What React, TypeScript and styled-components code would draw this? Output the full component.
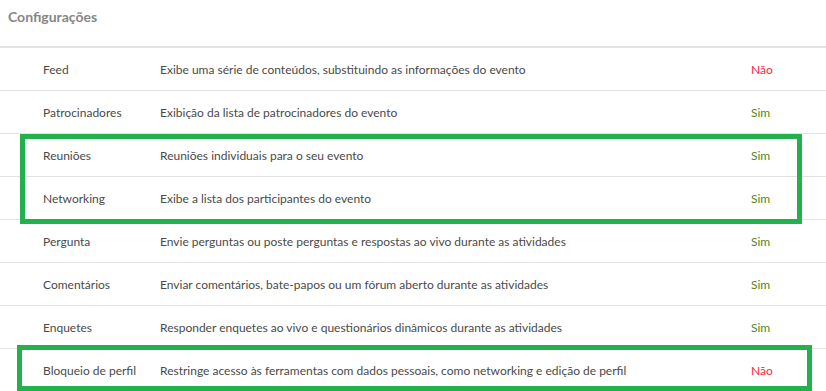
import React from "react";
import styled, { createGlobalStyle } from "styled-components";

const GlobalStyle = createGlobalStyle`
  html, body {
    margin: 0;
    padding: 0;
    background: #ffffff;
  }
  body {
    font-family: Lato, "Open Sans", "Liberation Sans", sans-serif;
  }
`;

const Page = styled.div`
  position: relative;
  width: 826px;
  height: 391px;
  overflow: hidden;
  background: #ffffff;
`;

const Header = styled.div`
  height: 48px;
  display: flex;
  align-items: flex-start;
  padding: 8px 0 0 8px;
  box-sizing: border-box;
  border-bottom: 2px solid #e3e3e3;
`;

const Title = styled.h2`
  margin: 0;
  font-size: 14px;
  line-height: 18px;
  font-weight: 700;
  color: #868686;
`;

const Table = styled.div`
  display: flex;
  flex-direction: column;
`;

const Row = styled.div`
  display: grid;
  grid-template-columns: 160px 1fr 75px;
  align-items: center;
  height: 43px;
  box-sizing: border-box;
  border-bottom: 1px solid #e2e2e2;
  font-size: 12px;
  color: #4a4a4a;
`;

const Name = styled.div`
  padding-left: 43px;
`;

const Description = styled.div`
  white-space: nowrap;
`;

const Status = styled.div<{ $on: boolean }>`
  color: ${(p) => (p.$on ? "#55861a" : "#f5283e")};
`;

const Highlight = styled.div<{ $top: number; $left: number; $width: number; $height: number }>`
  position: absolute;
  top: ${(p) => p.$top}px;
  left: ${(p) => p.$left}px;
  width: ${(p) => p.$width}px;
  height: ${(p) => p.$height}px;
  border: 5px solid #22b14c;
  box-sizing: border-box;
  pointer-events: none;
`;

const rows = [
  { name: "Feed", desc: "Exibe uma série de conteúdos, substituindo as informações do evento", on: false },
  { name: "Patrocinadores", desc: "Exibição da lista de patrocinadores do evento", on: true },
  { name: "Reuniões", desc: "Reuniões individuais para o seu evento", on: true },
  { name: "Networking", desc: "Exibe a lista dos participantes do evento", on: true },
  { name: "Pergunta", desc: "Envie perguntas ou poste perguntas e respostas ao vivo durante as atividades", on: true },
  { name: "Comentários", desc: "Enviar comentários, bate-papos ou um fórum aberto durante as atividades", on: true },
  { name: "Enquetes", desc: "Responder enquetes ao vivo e questionários dinâmicos durante as atividades", on: true },
  { name: "Bloqueio de perfil", desc: "Restringe acesso às ferramentas com dados pessoais, como networking e edição de perfil", on: false },
];

export default function App() {
  return (
    <>
      <GlobalStyle />
      <Page>
        <Header>
          <Title>Configurações</Title>
        </Header>
        <Table>
          {rows.map((r) => (
            <Row key={r.name}>
              <Name>{r.name}</Name>
              <Description>{r.desc}</Description>
              <Status $on={r.on}>{r.on ? "Sim" : "Não"}</Status>
            </Row>
          ))}
        </Table>
        <Highlight $top={134} $left={20} $width={782} $height={90} />
        <Highlight $top={345} $left={17} $width={795} $height={46} />
      </Page>
    </>
  );
}
